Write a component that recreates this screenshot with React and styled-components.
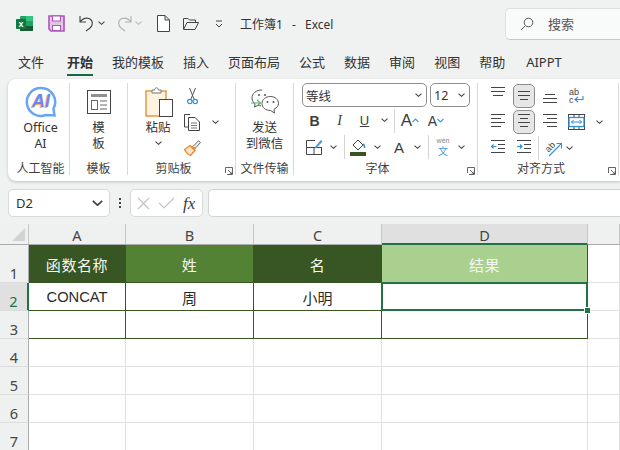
import React from "react";
import styled, { createGlobalStyle } from "styled-components";

const GlobalStyle = createGlobalStyle`
  html, body {
    margin: 0;
    padding: 0;
    width: 620px;
    height: 450px;
    overflow: hidden;
    background: #f0f1f1;
    font-family: "Noto Sans", "Noto Sans CJK SC", sans-serif;
    color: #3b3b3b;
  }
`;

const Page = styled.div`
  width: 620px;
  height: 450px;
  overflow: hidden;
  background: #f0f1f1;
`;

/* title bar */
const TitleBar = styled.div`
  height: 46px;
  display: flex;
  align-items: center;
  padding: 1px 0 0 14px;
  box-sizing: border-box;
  white-space: nowrap;
`;
const QuickSlot = styled.div`
  width: ${(p) => p.$w}px;
  height: 20px;
  flex: none;
  display: flex;
  align-items: center;
  justify-content: center;
`;
const DocTitle = styled.div`
  width: 265px;
  flex: none;
  font-size: 12px;
  color: #333;
  word-spacing: 6px;
`;
const SearchBox = styled.div`
  width: 130px;
  height: 32px;
  flex: none;
  box-sizing: border-box;
  background: #f9fafa;
  border: 1px solid #dedfdf;
  border-bottom-color: #c9c9c9;
  border-radius: 5px;
  display: flex;
  align-items: center;
  gap: 14px;
  padding-left: 14px;
  font-size: 13px;
  color: #555;
`;

/* tabs */
const TabRow = styled.div`
  height: 30px;
  display: flex;
  align-items: flex-start;
  gap: 19px;
  padding: 4px 0 0 18px;
  box-sizing: border-box;
`;
const Tab = styled.div`
  position: relative;
  height: 26px;
  line-height: 25px;
  font-size: 13px;
  color: #333;
  margin-left: ${(p) => p.$ml || 0}px;
  font-weight: ${(p) => (p.$active ? 700 : 400)};
  &::after {
    content: "";
    display: ${(p) => (p.$active ? "block" : "none")};
    position: absolute;
    left: 0;
    right: 0;
    bottom: 0;
    height: 2px;
    background: #16693e;
  }
`;

/* ribbon */
const Ribbon = styled.div`
  margin: 3px 0 0 8px;
  height: 102px;
  padding-top: 4px;
  box-sizing: border-box;
  background: #fff;
  border-radius: 8px 0 0 8px;
  box-shadow: 0 1px 3px rgba(0, 0, 0, 0.22);
  display: flex;
  align-items: flex-start;
`;
const Group = styled.div`
  width: ${(p) => p.$w}px;
  height: 92px;
  flex: none;
  box-sizing: border-box;
  border-right: 1px solid #d9d9d9;
  display: flex;
  flex-direction: column;
`;
const GroupBody = styled.div`
  flex: 1;
  display: flex;
  min-height: 0;
`;
const GroupLabel = styled.div`
  position: relative;
  height: 16px;
  line-height: 19px;
  text-align: center;
  font-size: 12px;
  color: #3f3f3f;
  padding-right: ${(p) => p.$shift || 0}px;
  padding-left: ${(p) => p.$shiftLeft || 0}px;
  white-space: nowrap;
`;
const Launcher = styled.div`
  position: absolute;
  right: 2px;
  top: 8px;
  width: 8px;
  height: 8px;
  display: flex;
`;
const BigButton = styled.div`
  width: ${(p) => (p.$w ? `${p.$w}px` : "100%")};
  margin-left: ${(p) => p.$ml || 0}px;
  flex: none;
  display: flex;
  flex-direction: column;
  align-items: center;
  font-size: 12.5px;
  line-height: 15.5px;
  color: #333;
  text-align: center;
`;
const BigIcon = styled.div`
  height: 37px;
  padding-left: ${(p) => p.$pl || 0}px;
  display: flex;
  align-items: center;
  justify-content: center;
`;
const ClipColumn = styled.div`
  display: flex;
  flex-direction: column;
`;
const Row = styled.div`
  height: ${(p) => p.$h || 26}px;
  display: flex;
  align-items: center;
  padding-left: ${(p) => p.$pl || 0}px;
  flex: none;
`;
const ToolStack = styled.div`
  display: flex;
  flex-direction: column;
`;
const Slot = styled.div`
  width: ${(p) => p.$w}px;
  height: ${(p) => (p.$active ? "24px" : "100%")};
  flex: none;
  box-sizing: border-box;
  display: flex;
  align-items: center;
  justify-content: center;
  ${(p) =>
    p.$active &&
    `margin: 0 2px;
     background: #e6e6e6;
     border: 1px solid #8c8c8c;
     border-radius: 5px;`}
`;
const VSep = styled.div`
  width: ${(p) => p.$w}px;
  height: 24px;
  flex: none;
  display: flex;
  justify-content: center;
  &::before {
    content: "";
    width: 1px;
    background: #d4d4d4;
  }
`;
const Combo = styled.div`
  width: ${(p) => p.$w}px;
  height: 24px;
  margin-right: 3px;
  flex: none;
  box-sizing: border-box;
  border: 1px solid #8f8f8f;
  border-radius: 5px;
  display: flex;
  align-items: center;
  justify-content: space-between;
  padding: 0 4px 0 3px;
  font-size: 12.5px;
  color: #333;
`;
const Glyph = styled.span`
  font-family: ${(p) => (p.$serif ? '"Liberation Serif", serif' : '"Liberation Sans", sans-serif')};
  font-size: ${(p) => p.$size || 13}px;
  font-weight: ${(p) => (p.$bold ? 700 : 400)};
  font-style: ${(p) => (p.$italic ? "italic" : "normal")};
  text-decoration: ${(p) => (p.$under ? "underline" : "none")};
  color: #3c3c3c;
  line-height: 1;
`;

/* formula bar */
const FormulaBar = styled.div`
  margin-top: 8px;
  height: 28px;
  display: flex;
  align-items: stretch;
  padding-left: 8px;
`;
const NameBox = styled.div`
  width: 102px;
  box-sizing: border-box;
  background: #fff;
  border: 1px solid #d9d9d9;
  border-radius: 5px;
  display: flex;
  align-items: center;
  justify-content: space-between;
  padding: 0 6px 0 7px;
  font-size: 13px;
  color: #333;
`;
const Dots = styled.div`
  width: 20px;
  display: flex;
  flex-direction: column;
  align-items: center;
  justify-content: center;
  gap: 2px;
  span {
    width: 2px;
    height: 2px;
    background: #444;
  }
`;
const FxBox = styled.div`
  width: 73px;
  box-sizing: border-box;
  background: #fff;
  border: 1px solid #d9d9d9;
  border-radius: 5px;
  display: flex;
  align-items: center;
  gap: 8px;
  padding-left: 6px;
`;
const FormulaInput = styled.div`
  flex: 1;
  margin-left: 5px;
  background: #fff;
  border: 1px solid #d4d4d4;
  border-right: none;
  border-radius: 5px 0 0 5px;
`;

/* sheet */
const Sheet = styled.div`
  margin-top: 7px;
  display: grid;
  grid-template-columns: 29px 97px 128px 128px 206px 1fr;
  grid-template-rows: 21px 38px repeat(6, 28px);
  background: #fff;
`;
const Corner = styled.div`
  background: #eff0f0;
  border-right: 1px solid #c6c6c6;
  border-bottom: 1px solid #ababab;
  box-sizing: border-box;
  display: flex;
  align-items: flex-end;
  justify-content: flex-end;
  padding: 0 3px 3px 0;
`;
const ColHead = styled.div`
  box-sizing: border-box;
  background: ${(p) => (p.$on ? "#e0e0e0" : "#eff0f0")};
  border-right: 1px solid #c6c6c6;
  border-bottom: ${(p) => (p.$on ? "2px solid #217346" : "1px solid #ababab")};
  text-align: center;
  font-size: 14.5px;
  line-height: 23px;
  color: #444;
`;
const RowHead = styled.div`
  box-sizing: border-box;
  background: ${(p) => (p.$on ? "#e0e0e0" : "#eff0f0")};
  color: ${(p) => (p.$on ? "#217346" : "#444")};
  border-right: ${(p) => (p.$on ? "2px solid #217346" : "1px solid #ababab")};
  border-bottom: 1px solid #dcdcdc;
  font-size: 14.5px;
  display: flex;
  align-items: flex-end;
  justify-content: center;
  line-height: 18px;
`;
const Cell = styled.div`
  box-sizing: border-box;
  display: flex;
  align-items: center;
  justify-content: center;
  padding-top: 1px;
  background: ${(p) => p.$fill || "#fff"};
  color: ${(p) => (p.$fill ? "#f4f8f1" : "#2b2b2b")};
  font-family: "Liberation Sans", "Noto Sans CJK SC", sans-serif;
  font-size: ${(p) => (p.$latin ? 14.7 : 15)}px;
  letter-spacing: ${(p) => (p.$fill ? 0.6 : 0)}px;
  border-right: 1px solid ${(p) => p.$line || "#e0e0e0"};
  border-bottom: 1px solid ${(p) => p.$line || "#e0e0e0"};
`;
const SelectedCell = styled(Cell)`
  position: relative;
  &::before {
    content: "";
    position: absolute;
    left: -1px;
    top: -1px;
    right: -1px;
    bottom: -1px;
    border: 2px solid #217346;
    pointer-events: none;
  }
  &::after {
    content: "";
    position: absolute;
    right: -4px;
    bottom: -4px;
    width: 5px;
    height: 5px;
    background: #217346;
    border: 1px solid #fff;
  }
`;

/* drawings */
const Chevron = ({ w = 7, color = "#444" }) => (
  <svg width={w} height={w * 0.6} viewBox="0 0 7 4">
    <path d="M.5.5 3.5 3.2 6.5.5" fill="none" stroke={color} strokeWidth="1.1" />
  </svg>
);
const LauncherIcon = () => (
  <svg width="8" height="8" viewBox="0 0 8 8">
    <path d="M.5 6V.5H7.5V7.5H2M3 3 7 7M7 4.5V7H4.5" fill="none" stroke="#555" strokeWidth=".9" />
  </svg>
);
const Lines = ({ rows, arrow, w = 16 }) => (
  <svg width={w} height="20" viewBox={`0 -2 ${w} 20`}>
    {rows.map(([x1, x2, y], i) => (
      <path key={i} d={`M${x1} ${y}H${x2}`} stroke="#444" strokeWidth="1" />
    ))}
    {arrow}
  </svg>
);
const ExcelLogo = () => (
  <svg width="17" height="17" viewBox="0 0 17 17">
    <rect x="4" y="1" width="13" height="15" rx="1" fill="#21a366" />
    <rect x="10" y="1" width="7" height="5" fill="#33c481" />
    <rect x="4" y="6" width="6" height="5" fill="#107c41" />
    <rect x="10" y="11" width="7" height="5" fill="#185c37" />
    <rect x="4" y="11" width="6" height="5" fill="#185c37" />
    <rect y="4" width="10" height="10" rx="1" fill="#0f7a40" />
    <text x="5" y="12" textAnchor="middle" fontSize="9" fontWeight="700" fill="#fff" fontFamily="Liberation Sans">x</text>
  </svg>
);
const SaveIcon = () => (
  <svg width="17" height="17" viewBox="0 0 17 17">
    <path d="M1 1H16V16H3L1 14Z" fill="#e3c6e6" stroke="#ad55b5" strokeWidth="1.6" />
    <rect x="4.5" y="1" width="8" height="5" fill="#fff" stroke="#ad55b5" />
    <rect x="4.5" y="10.5" width="8" height="5" fill="#fff" stroke="#ad55b5" />
  </svg>
);
const UndoIcon = ({ color, flip }) => (
  <svg width="17" height="17" viewBox="0 0 17 17" style={flip ? { transform: "scaleX(-1)" } : undefined}>
    <path d="M2 1V7H8M2 7C5 3 8 2.500 11 3.500C15 5 15.500 10 12 13L8 16" fill="none" stroke={color} strokeWidth="1.1" />
  </svg>
);
const NewDoc = () => (
  <svg width="13" height="17" viewBox="0 0 13 17">
    <path d="M.5.5H8L12.500 5V16.500H.5ZM8 .5V5H12.500" fill="#fff" stroke="#444" />
  </svg>
);
const OpenFolder = () => (
  <svg width="16" height="13" viewBox="0 0 16 13">
    <path d="M.5 12V1.500H5L6.500 3H12.500V5M.5 12.500H12L15.500 5.500H4L.5 12.500Z" fill="none" stroke="#444" />
  </svg>
);
const Customize = () => (
  <svg width="8" height="8" viewBox="0 0 8 8">
    <path d="M1 1H7M1 4 4 7 7 4" fill="none" stroke="#444" />
  </svg>
);
const SearchIcon = () => (
  <svg width="14" height="14" viewBox="0 0 14 14">
    <circle cx="8.500" cy="5.500" r="4.300" fill="none" stroke="#555" />
    <path d="M5.300 8.700 1 13" stroke="#555" />
  </svg>
);
const AiIcon = () => (
  <svg width="32" height="32" viewBox="0 0 32 32">
    <defs>
      <linearGradient id="aiText" x1="0" y1="0" x2="1" y2="1">
        <stop offset="0" stopColor="#4d8ff0" />
        <stop offset="1" stopColor="#8a7cf0" />
      </linearGradient>
    </defs>
    <path d="M16 2A14 14 0 1 0 21 29L29.500 29.500L28.500 22.500A14 14 0 0 0 16 2Z" fill="#fff" stroke="#6aa5f5" strokeWidth="2.500" />
    <text x="15" y="22" textAnchor="middle" fontSize="18" fontWeight="700" fontStyle="italic" fill="#f2b26b" fontFamily="Liberation Sans">AI</text>
    <text x="16" y="21" textAnchor="middle" fontSize="18" fontWeight="700" fontStyle="italic" fill="url(#aiText)" fontFamily="Liberation Sans">AI</text>
  </svg>
);
const TemplateIcon = () => (
  <svg width="24" height="24" viewBox="0 0 24 24">
    <rect x=".5" y=".5" width="23" height="23" fill="#fff" stroke="#444" />
    <rect x="4" y="4" width="16" height="3" fill="#8f8f8f" />
    <rect x="4.500" y="10.500" width="6" height="9" fill="#fff" stroke="#666" />
    <path d="M13 11H20M13 15H20M13 19H20" stroke="#666" />
  </svg>
);
const PasteIcon = () => (
  <svg width="28" height="30" viewBox="0 0 28 30">
    <rect x="1" y="4" width="20" height="25" fill="#fff3e2" stroke="#e8922f" strokeWidth="1.400" />
    <path d="M7 6V3H9.500C10 0 13 0 13.500 3H16V6Z" fill="#fff" stroke="#777" />
    <rect x="14.500" y="12.500" width="13" height="17" fill="#fff" stroke="#444" />
  </svg>
);
const ScissorsIcon = () => (
  <svg width="11" height="17" viewBox="0 0 11 17">
    <path d="M2.500 0 7 11M8.500 0 4 11" fill="none" stroke="#555" />
    <circle cx="2.800" cy="13.500" r="2.200" fill="none" stroke="#2f8fd8" strokeWidth="1.200" />
    <circle cx="8.200" cy="13.500" r="2.200" fill="none" stroke="#2f8fd8" strokeWidth="1.200" />
  </svg>
);
const CopyIcon = () => (
  <svg width="16" height="17" viewBox="0 0 16 17">
    <path d="M6 .5H.5V13H4" fill="none" stroke="#444" />
    <path d="M4.500 3.500H11L15.500 8V16.500H4.500Z" fill="#fff" stroke="#444" />
    <path d="M7 9H13M7 11.500H13M7 14H13" stroke="#777" />
  </svg>
);
const BrushIcon = () => (
  <svg width="17" height="16" viewBox="0 0 17 16">
    <path d="M.5 9.500 6 5.500 11 10.500 6.500 15.500C4 15 2 12 .5 9.500Z" fill="#fbe3c4" stroke="#e8892b" strokeWidth="1.300" />
    <path d="M6 5.500 8 7.500 11 10.500 12 8 10 6.500Z" fill="#e8892b" />
    <path d="M9.500 6 14.500 .8 16.500 2.500 11.500 8" fill="#f1f1f1" stroke="#666" />
  </svg>
);
const WechatIcon = () => (
  <svg width="28" height="25" viewBox="0 0 28 25">
    <path d="M11 1C5 1 1 4.500 1 9C1 11.500 2.500 13.500 4 15L3.500 18L7 16.300C8 16.600 9 16.800 10 16.800" fill="none" stroke="#555" />
    <path d="M19.500 7.500C14.500 7.500 11 10.500 11 14.500C11 18.500 14.500 21.500 19.500 21.500L23.500 24L23 20.300C25.500 19 27.500 17 27.500 14.500C27.500 10.500 24 7.500 19.500 7.500Z" fill="#fff" stroke="#555" />
    <circle cx="8" cy="6" r="1" fill="#555" />
    <circle cx="14" cy="6" r="1" fill="#555" />
    <circle cx="16.500" cy="13" r="1" fill="#555" />
    <circle cx="22.500" cy="13" r="1" fill="#555" />
    <path d="M0 14H9M6 11 9.500 14 6 17" fill="none" stroke="#5bb075" strokeWidth="1.200" />
  </svg>
);
const BorderIcon = () => (
  <svg width="17" height="17" viewBox="0 0 17 17">
    <path d="M9 1.500H.5V15.500H15.500V8M.5 8.500H15.500M8 8.500V15.500" fill="none" stroke="#444" />
    <path d="M9 8 15 1 16.500 2.500 10.500 9 8.500 9.500Z" fill="#3b9ae1" />
  </svg>
);
const FillIcon = () => (
  <svg width="17" height="18" viewBox="0 0 17 18">
    <path d="M3 7 8 2 13 7 8 12Z" fill="#fff" stroke="#444" />
    <path d="M13 6C15 7 14.500 9 14.500 10" fill="none" stroke="#2f8fd8" strokeWidth="1.600" />
    <rect y="14" width="16" height="4" fill="#375623" />
  </svg>
);
const GrowA = ({ up }) => (
  <svg width="7" height="5" viewBox="0 0 7 5">
    <path d={up ? "M.5 4 3.500 1 6.500 4" : "M.5 1 3.500 4 6.500 1"} fill="none" stroke="#3b9ae1" strokeWidth="1.100" />
  </svg>
);
const WenIcon = () => (
  <svg width="16" height="22" viewBox="0 0 16 22">
    <text x="8" y="7" textAnchor="middle" fontSize="7" fill="#888" fontFamily="Liberation Sans">wén</text>
    <text x="8" y="18.500" textAnchor="middle" fontSize="10" fill="#3b9ae1" fontFamily="Noto Sans CJK SC">文</text>
  </svg>
);
const WrapIcon = () => (
  <svg width="16" height="18" viewBox="0 0 16 18">
    <text x="1" y="7.500" fontSize="9" fill="#444" fontFamily="Liberation Sans">ab</text>
    <text x="1" y="16" fontSize="9" fill="#444" fontFamily="Liberation Sans">c</text>
    <path d="M15 9V12.500H7.500M10 10 7 12.500 10 15" fill="none" stroke="#2f8fd8" strokeWidth="1.100" />
  </svg>
);
const MergeIcon = () => (
  <svg width="17" height="16" viewBox="0 0 17 16">
    <rect x=".5" y=".5" width="16" height="15" fill="#fff" stroke="#444" />
    <path d="M6 .5V15.500M11 .5V15.500" stroke="#444" />
    <rect x="1" y="3.500" width="15" height="9" fill="#fff" stroke="#2f8fd8" strokeWidth="1.300" />
    <path d="M3.500 8H13.500M5.500 6 3.500 8 5.500 10M11.500 6 13.500 8 11.500 10" fill="none" stroke="#2f8fd8" />
  </svg>
);
const OrientIcon = () => (
  <svg width="18" height="18" viewBox="0 0 18 18">
    <text x="1" y="11" fontSize="9" fill="#444" transform="rotate(-45 6 8)" fontFamily="Liberation Sans">ab</text>
    <path d="M5 17 17 5M12.500 4.500H17.500V9.500" fill="none" stroke="#2f8fd8" strokeWidth="1.100" />
  </svg>
);
const Indent = ({ right }) => (
  <Lines
    rows={[[1, 15, 0.5], [8, 15, 4.5], [8, 15, 8.5], [1, 15, 12.5]]}
    arrow={
      <path
        d={right ? "M1 6.500H6M4 4.500 6 6.500 4 8.500" : "M1.500 6.500H6.500M3.500 4.500 1.500 6.500 3.500 8.500"}
        fill="none"
        stroke="#2f8fd8"
        strokeWidth="1.100"
      />
    }
  />
);

const Sm = ({ w, children }) => <Slot $w={w}>{children}</Slot>;
const Ch = ({ w = 12 }) => (
  <Slot $w={w}>
    <Chevron />
  </Slot>
);

const tabs = [
  { text: "文件" },
  { text: "开始", ml: 4, active: true },
  { text: "我的模板" },
  { text: "插入" },
  { text: "页面布局" },
  { text: "公式" },
  { text: "数据" },
  { text: "审阅" },
  { text: "视图" },
  { text: "帮助" },
  { text: "AIPPT", ml: 2 },
];
const DARK = "#375623";

export default function App() {
  return (
    <Page>
      <GlobalStyle />
      <TitleBar>
        <QuickSlot $w={20}><ExcelLogo /></QuickSlot>
        <QuickSlot $w={12} />
        <QuickSlot $w={20}><SaveIcon /></QuickSlot>
        <QuickSlot $w={10} />
        <QuickSlot $w={20}><UndoIcon color="#444" /></QuickSlot>
        <QuickSlot $w={10}><Chevron /></QuickSlot>
        <QuickSlot $w={9} />
        <QuickSlot $w={19}><UndoIcon color="#b0b0b0" flip /></QuickSlot>
        <QuickSlot $w={9}><Chevron color="#b8b8b8" /></QuickSlot>
        <QuickSlot $w={12} />
        <QuickSlot $w={16}><NewDoc /></QuickSlot>
        <QuickSlot $w={11} />
        <QuickSlot $w={18}><OpenFolder /></QuickSlot>
        <QuickSlot $w={12} />
        <QuickSlot $w={14}><Customize /></QuickSlot>
        <QuickSlot $w={14} />
        <DocTitle>工作簿1 - Excel</DocTitle>
        <SearchBox>
          <SearchIcon />
          搜索
        </SearchBox>
      </TitleBar>

      <TabRow>
        {tabs.map((t) => (
          <Tab key={t.text} $active={t.active} $ml={t.ml}>{t.text}</Tab>
        ))}
      </TabRow>

      <Ribbon>
        <Group $w={62}>
          <GroupBody>
            <BigButton $w={57} $ml={4}>
              <BigIcon><AiIcon /></BigIcon>
              <span>Office</span>
              <span>AI</span>
            </BigButton>
          </GroupBody>
          <GroupLabel $shiftLeft={4}>人工智能</GroupLabel>
        </Group>

        <Group $w={58}>
          <GroupBody>
            <BigButton>
              <BigIcon><TemplateIcon /></BigIcon>
              <span>模</span>
              <span>板</span>
            </BigButton>
          </GroupBody>
          <GroupLabel>模板</GroupLabel>
        </Group>

        <Group $w={108}>
          <GroupBody>
            <BigButton $w={46} $ml={7}>
              <BigIcon $pl={2}><PasteIcon /></BigIcon>
              <span>粘贴</span>
              <Row $h={15}><Chevron /></Row>
            </BigButton>
            <ClipColumn>
              <Row><Sm w={22}><ScissorsIcon /></Sm></Row>
              <Row><Sm w={22}><CopyIcon /></Sm><Sm w={6} /><Ch /></Row>
              <Row><Sm w={22}><BrushIcon /></Sm></Row>
            </ClipColumn>
          </GroupBody>
          <GroupLabel $shift={16}>
            剪贴板
            <Launcher><LauncherIcon /></Launcher>
          </GroupLabel>
        </Group>

        <Group $w={58}>
          <GroupBody>
            <BigButton>
              <BigIcon><WechatIcon /></BigIcon>
              <span>发送</span>
              <span>到微信</span>
            </BigButton>
          </GroupBody>
          <GroupLabel>文件传输</GroupLabel>
        </Group>

        <Group $w={184}>
          <GroupBody>
            <ToolStack>
              <Row $pl={8} $h={24}>
                <Combo $w={125}>等线<Chevron /></Combo>
                <Combo $w={40}>12<Chevron /></Combo>
              </Row>
              <Row $pl={8} $h={27}>
                <Sm w={25}><Glyph $bold $size={14}>B</Glyph></Sm>
                <Sm w={25}><Glyph $serif $italic $size={14}>I</Glyph></Sm>
                <Sm w={25}><Glyph $under>U</Glyph></Sm>
                <Ch w={14} />
                <VSep $w={6} />
                <Sm w={26}><Glyph $size={17}>A</Glyph><GrowA up /></Sm>
                <Sm w={26}><Glyph $size={14}>A</Glyph><GrowA /></Sm>
              </Row>
              <Row $pl={8} $h={26}>
                <Sm w={25}><BorderIcon /></Sm>
                <Ch />
                <VSep $w={10} />
                <Sm w={18}><FillIcon /></Sm>
                <Ch w={20} />
                <Sm w={24}><Glyph $size={15}>A</Glyph></Sm>
                <Ch />
                <VSep $w={10} />
                <Sm w={20}><WenIcon /></Sm>
                <Ch w={16} />
              </Row>
            </ToolStack>
          </GroupBody>
          <GroupLabel $shift={16}>
            字体
            <Launcher><LauncherIcon /></Launcher>
          </GroupLabel>
        </Group>

        <Group $w={141}>
          <GroupBody>
            <ToolStack>
              <Row $pl={7} $h={26}>
                <Sm w={26}><Lines rows={[[1, 15, -0.5], [1, 15, 3.5], [3, 13, 7.5]]} /></Sm>
                <Slot $w={22} $active><Lines rows={[[2, 14, 3.5], [2, 14, 7.5], [4, 12, 11.5]]} /></Slot>
                <Sm w={26}><Lines rows={[[3, 13, 6.5], [1, 15, 10.5], [1, 15, 14.5]]} /></Sm>
                <Sm w={26}><WrapIcon /></Sm>
              </Row>
              <Row $pl={7} $h={26}>
                <Sm w={26}><Lines rows={[[1, 15, 0.5], [1, 11, 4.5], [1, 15, 8.5], [1, 11, 12.5]]} /></Sm>
                <Slot $w={22} $active><Lines rows={[[2, 14, 0.5], [4, 12, 4.5], [2, 14, 8.5], [4, 12, 12.5]]} /></Slot>
                <Sm w={26}><Lines rows={[[1, 15, 0.5], [5, 15, 4.5], [1, 15, 8.5], [5, 15, 12.5]]} /></Sm>
                <Sm w={26}><MergeIcon /></Sm>
                <Ch w={20} />
              </Row>
              <Row $pl={7} $h={26}>
                <Sm w={26}><Indent /></Sm>
                <Sm w={26}><Indent right /></Sm>
                <VSep $w={3} />
                <Sm w={26}><OrientIcon /></Sm>
                <Ch w={7} />
              </Row>
            </ToolStack>
          </GroupBody>
          <GroupLabel $shift={14}>
            对齐方式
            <Launcher><LauncherIcon /></Launcher>
          </GroupLabel>
        </Group>
      </Ribbon>

      <FormulaBar>
        <NameBox>
          D2
          <Chevron w={11} />
        </NameBox>
        <Dots><span /><span /><span /></Dots>
        <FxBox>
          <svg width="13" height="13" viewBox="0 0 13 13">
            <path d="M1 1 12 12M12 1 1 12" stroke="#c4c4c4" strokeWidth="1.200" />
          </svg>
          <svg width="17" height="12" viewBox="0 0 17 12">
            <path d="M1 6 6 11 16 1" fill="none" stroke="#c4c4c4" strokeWidth="1.200" />
          </svg>
          <Glyph $serif $italic $size={17}>fx</Glyph>
        </FxBox>
        <FormulaInput />
      </FormulaBar>

      <Sheet>
        <Corner>
          <svg width="13" height="13" viewBox="0 0 13 13">
            <path d="M13 0V13H0Z" fill="#d2d2d2" />
          </svg>
        </Corner>
        <ColHead>A</ColHead>
        <ColHead>B</ColHead>
        <ColHead>C</ColHead>
        <ColHead $on>D</ColHead>
        <ColHead />

        <RowHead>1</RowHead>
        <Cell $fill={DARK} $line={DARK}>函数名称</Cell>
        <Cell $fill="#548235" $line={DARK}>姓</Cell>
        <Cell $fill={DARK} $line={DARK}>名</Cell>
        <Cell $fill="#a9d08e" $line={DARK}>结果</Cell>
        <Cell />

        <RowHead $on>2</RowHead>
        <Cell $line={DARK} $latin>CONCAT</Cell>
        <Cell $line={DARK}>周</Cell>
        <Cell $line={DARK}>小明</Cell>
        <SelectedCell $line={DARK} />
        <Cell />

        <RowHead>3</RowHead>
        <Cell $line={DARK} />
        <Cell $line={DARK} />
        <Cell $line={DARK} />
        <Cell $line={DARK} />
        <Cell />

        {[4, 5, 6, 7].map((n) => (
          <React.Fragment key={n}>
            <RowHead>{n}</RowHead>
            <Cell />
            <Cell />
            <Cell />
            <Cell />
            <Cell />
          </React.Fragment>
        ))}
      </Sheet>
    </Page>
  );
}
